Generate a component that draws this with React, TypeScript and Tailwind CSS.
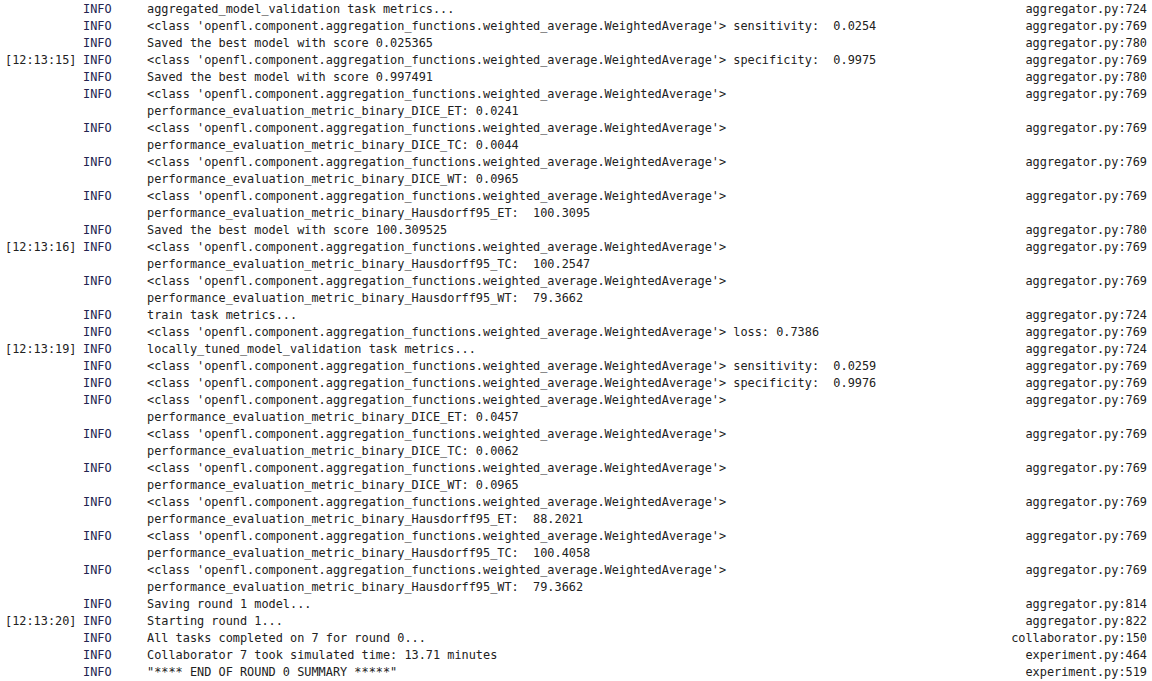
import React from "react";

type Entry = { t?: string; msg: string[]; src: string };

const C = "<class 'openfl.component.aggregation_functions.weighted_average.WeightedAverage'>";
const P = "performance_evaluation_metric_binary_";

const entries: Entry[] = [
  { msg: ["aggregated_model_validation task metrics..."], src: "aggregator.py:724" },
  { msg: [C + " sensitivity:  0.0254"], src: "aggregator.py:769" },
  { msg: ["Saved the best model with score 0.025365"], src: "aggregator.py:780" },
  { t: "[12:13:15]", msg: [C + " specificity:  0.9975"], src: "aggregator.py:769" },
  { msg: ["Saved the best model with score 0.997491"], src: "aggregator.py:780" },
  { msg: [C, P + "DICE_ET: 0.0241"], src: "aggregator.py:769" },
  { msg: [C, P + "DICE_TC: 0.0044"], src: "aggregator.py:769" },
  { msg: [C, P + "DICE_WT: 0.0965"], src: "aggregator.py:769" },
  { msg: [C, P + "Hausdorff95_ET:  100.3095"], src: "aggregator.py:769" },
  { msg: ["Saved the best model with score 100.309525"], src: "aggregator.py:780" },
  { t: "[12:13:16]", msg: [C, P + "Hausdorff95_TC:  100.2547"], src: "aggregator.py:769" },
  { msg: [C, P + "Hausdorff95_WT:  79.3662"], src: "aggregator.py:769" },
  { msg: ["train task metrics..."], src: "aggregator.py:724" },
  { msg: [C + " loss: 0.7386"], src: "aggregator.py:769" },
  { t: "[12:13:19]", msg: ["locally_tuned_model_validation task metrics..."], src: "aggregator.py:724" },
  { msg: [C + " sensitivity:  0.0259"], src: "aggregator.py:769" },
  { msg: [C + " specificity:  0.9976"], src: "aggregator.py:769" },
  { msg: [C, P + "DICE_ET: 0.0457"], src: "aggregator.py:769" },
  { msg: [C, P + "DICE_TC: 0.0062"], src: "aggregator.py:769" },
  { msg: [C, P + "DICE_WT: 0.0965"], src: "aggregator.py:769" },
  { msg: [C, P + "Hausdorff95_ET:  88.2021"], src: "aggregator.py:769" },
  { msg: [C, P + "Hausdorff95_TC:  100.4058"], src: "aggregator.py:769" },
  { msg: [C, P + "Hausdorff95_WT:  79.3662"], src: "aggregator.py:769" },
  { msg: ["Saving round 1 model..."], src: "aggregator.py:814" },
  { t: "[12:13:20]", msg: ["Starting round 1..."], src: "aggregator.py:822" },
  { msg: ["All tasks completed on 7 for round 0..."], src: "collaborator.py:150" },
  { msg: ["Collaborator 7 took simulated time: 13.71 minutes"], src: "experiment.py:464" },
  { msg: ['"**** END OF ROUND 0 SUMMARY *****"'], src: "experiment.py:519" },
];

export default function App() {
  return (
    <div
      className="w-[1152px] h-[681px] overflow-hidden bg-white text-[#212121] pt-px pl-[5px] pr-[5px] text-[11.88px] leading-[17px]"
      style={{ fontFamily: '"DejaVu Sans Mono", "Liberation Mono", monospace' }}
    >
      {entries.map((e, i) =>
        e.msg.map((m, j) => (
          <div key={`${i}-${j}`} className="flex h-[17px] whitespace-pre">
            <span className="w-[78px] shrink-0">{j === 0 && e.t ? e.t : ""}</span>
            <span className="w-[64px] shrink-0 text-[#23234f]">{j === 0 ? "INFO" : ""}</span>
            <span className="flex-1">{m}</span>
            <span className="shrink-0 text-right">{j === 0 ? e.src : ""}</span>
          </div>
        ))
      )}
    </div>
  );
}
